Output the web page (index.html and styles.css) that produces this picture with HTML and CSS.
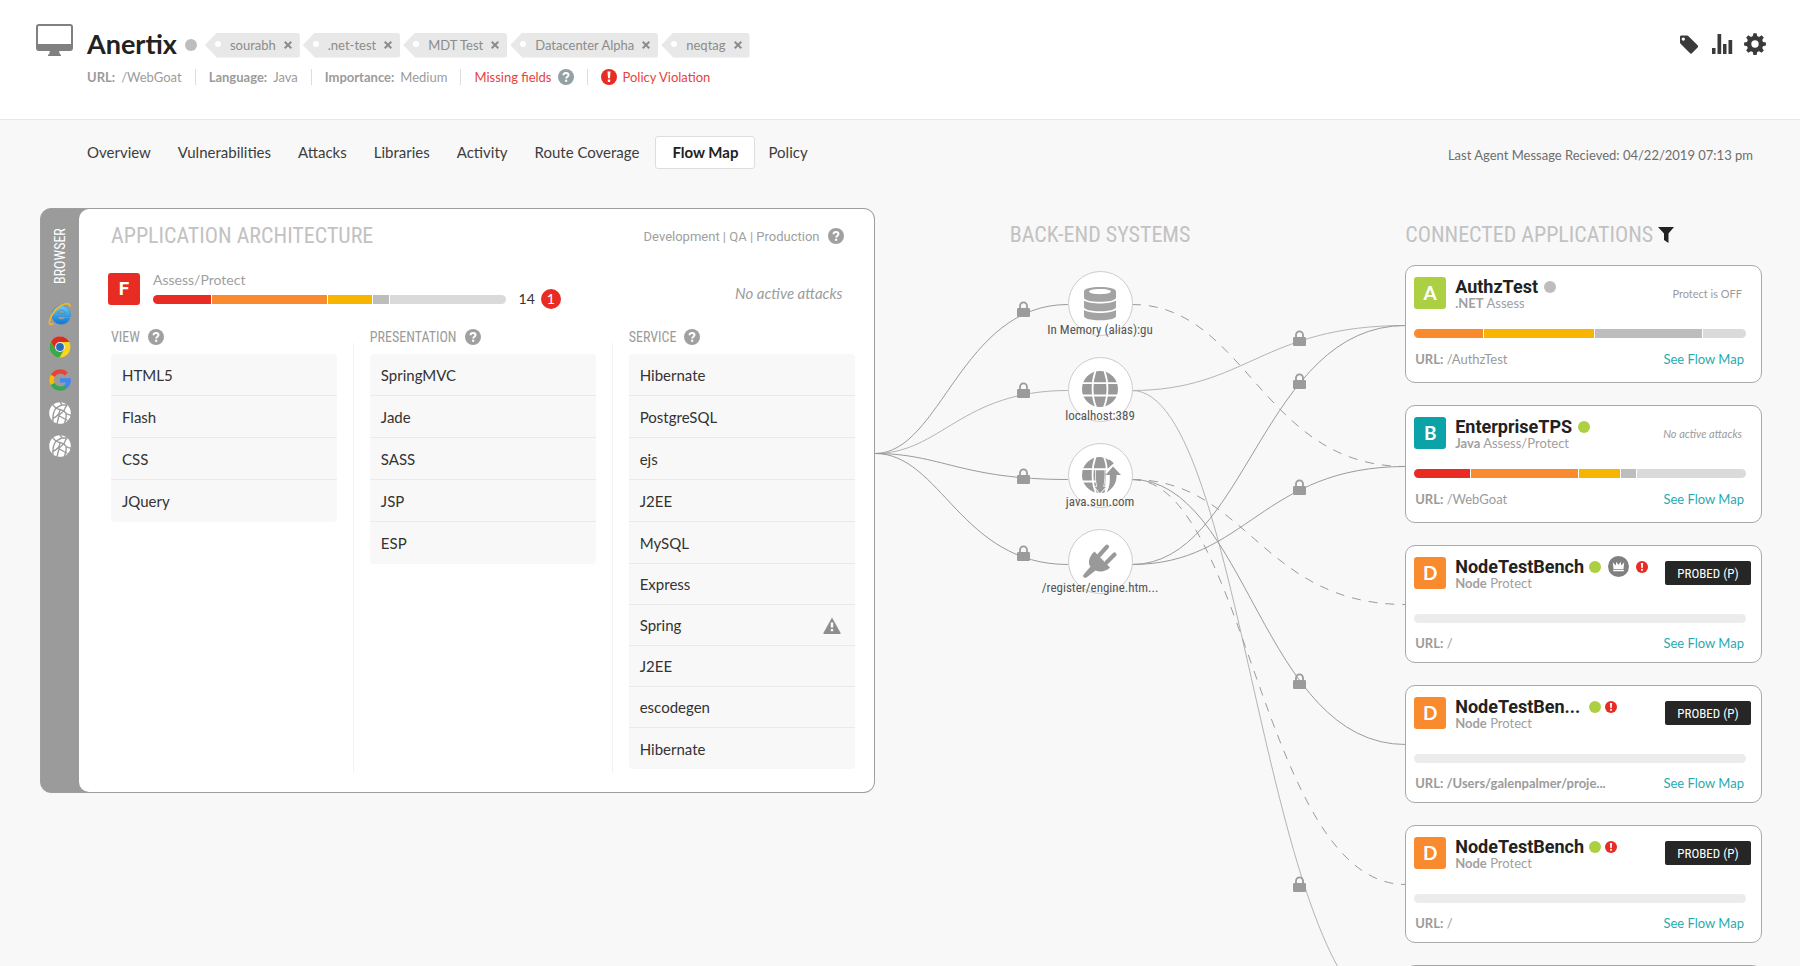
FILE: index.html
```html
<!DOCTYPE html>
<html lang="en">
<head>
<meta charset="utf-8">
<title>Anertix - Flow Map</title>
<link rel="stylesheet" href="styles.css">
</head>
<body>
<svg class="sprite" aria-hidden="true">
  <symbol id="i-help" viewBox="0 0 16 16"><circle cx="8" cy="8" r="8" fill="currentColor"/><path d="M5.500 6.200C5.600 4.700 6.600 3.900 8 3.900c1.500 0 2.500.9 2.500 2.100 0 1.700-2.300 1.900-2.300 3.500" fill="none" stroke="#fff" stroke-width="2"/><rect x="7.100" y="10.700" width="2.100" height="2.100" fill="#fff"/></symbol>
  <symbol id="i-alert" viewBox="0 0 16 16"><circle cx="8" cy="8" r="8" fill="#e82c24"/><path d="M6.500 2.500h3l-.5 6.800H7z" fill="#fff"/><rect x="6.800" y="10.500" width="2.400" height="2.500" fill="#fff"/></symbol>
  <symbol id="i-lock" viewBox="0 0 13 16"><path d="M3 7.500V4.800a3.500 3.500 0 0 1 7 0v2.700" fill="none" stroke="#9b9b9b" stroke-width="1.800"/><rect y="7" width="13" height="9" rx="1.200" fill="#9b9b9b"/></symbol>
  <symbol id="i-web" viewBox="0 0 22 22"><circle cx="11" cy="11" r="10.800" fill="#fff"/><g fill="none" stroke="#9b9b9b" stroke-width="1.400"><path d="M3.500 2.500 7 6.200l6-3.400 5.500.2M13 2.800 11 0M7 6.200c-3 4-3.500 8-3 13.500M7 6.200c2 1 3 1.500 4 1.300l4 1.300M11 7.500c0 4-2 6.500-7 9M9.500 13.500l9 5M10 13.700 8 22M15 8.800l-5.500 4.700M15 8.800c.5-2 1.500-4 3-5.500M15 8.800c1.500 3 3 4 7 4.500M17 12c.5 3 0 5.500-1.500 9"/></g></symbol>
</svg>

<div class="page">
  <header class="header">
    <svg class="monitor" viewBox="0 0 37 33" aria-hidden="true"><rect x="1" y="1" width="35" height="25" rx="2" fill="#fff" stroke="#808080" stroke-width="2"/><path d="M1 20h35v4.500a2 2 0 0 1-2 2H3a2 2 0 0 1-2-2z" fill="#808080"/><path d="M14 26h9l.6 3.600 1.400 1.400v1H12v-1l1.400-1.400z" fill="#808080"/></svg>
    <div class="identity">
      <div class="identity__top">
        <h1 class="app-title">Anertix</h1>
        <span class="dot dot--off"></span>
        <ul class="tags">
          <li class="tag"><span>sourabh</span><button class="tag__x" aria-label="Remove sourabh"><svg viewBox="0 0 8 8"><path d="M.7.7l6.600 6.600M7.300.7L.7 7.300"/></svg></button></li>
          <li class="tag"><span>.net-test</span><button class="tag__x" aria-label="Remove .net-test"><svg viewBox="0 0 8 8"><path d="M.7.7l6.600 6.600M7.300.7L.7 7.300"/></svg></button></li>
          <li class="tag"><span>MDT Test</span><button class="tag__x" aria-label="Remove MDT Test"><svg viewBox="0 0 8 8"><path d="M.7.7l6.600 6.600M7.300.7L.7 7.300"/></svg></button></li>
          <li class="tag"><span>Datacenter Alpha</span><button class="tag__x" aria-label="Remove Datacenter Alpha"><svg viewBox="0 0 8 8"><path d="M.7.7l6.600 6.600M7.300.7L.7 7.300"/></svg></button></li>
          <li class="tag"><span>neqtag</span><button class="tag__x" aria-label="Remove neqtag"><svg viewBox="0 0 8 8"><path d="M.7.7l6.600 6.600M7.300.7L.7 7.300"/></svg></button></li>
        </ul>
      </div>
      <ul class="meta">
        <li class="meta__item"><b>URL:</b><span>/WebGoat</span></li>
        <li class="meta__item"><b>Language:</b><span>Java</span></li>
        <li class="meta__item"><b>Importance:</b><span>Medium</span></li>
        <li class="meta__item meta__item--red"><span>Missing fields</span><svg class="icon meta__help"><use href="#i-help"/></svg></li>
        <li class="meta__item meta__item--red"><svg class="icon"><use href="#i-alert"/></svg><span>Policy Violation</span></li>
      </ul>
    </div>
    <div class="tools">
      <button class="tool" aria-label="Tags"><svg viewBox="0 0 22 22"><path fill-rule="evenodd" d="M2 3.500v5.800c0 .6.200 1 .6 1.400l9.200 9.400c.7.700 1.600.7 2.300 0l5.500-5.600c.7-.7.7-1.500 0-2.200L10.500 3.200A2 2 0 0 0 9 2.500H3.500A1.500 1.500 0 0 0 2 3.500zm5 2.600a1.700 1.700 0 1 1-3.400 0 1.700 1.700 0 0 1 3.400 0z"/></svg></button>
      <button class="tool" aria-label="Statistics"><svg viewBox="0 0 22 22"><path d="M1 15h3.500v6H1zM6.500 1h3.700v20H6.500zM12 11h3.500v10H12zM17.500 7h3.700v14h-3.700z"/></svg></button>
      <button class="tool" aria-label="Settings"><svg viewBox="0 0 22 22"><path fill-rule="evenodd" d="M9.400.2h3.200l.6 2.900 1.900.8L17.600 2.300l2.200 2.200-1.600 2.500.8 1.900 2.900.6v3.100l-2.900.6-.8 1.900 1.600 2.500-2.200 2.200-2.500-1.600-1.900.8-.6 2.900H9.400L8.800 19l-1.900-.8-2.500 1.600-2.200-2.200 1.600-2.500L3 13.200l-2.900-.6V9.500L3 8.900 3.800 7 2.200 4.500l2.200-2.200 2.500 1.600 1.900-.8zM11 7.300a3.700 3.700 0 1 0 0 7.400 3.700 3.700 0 0 0 0-7.400z"/></svg></button>
    </div>
  </header>

  <div class="subbar">
    <nav class="tabs">
      <a class="tab" href="#">Overview</a>
      <a class="tab" href="#">Vulnerabilities</a>
      <a class="tab" href="#">Attacks</a>
      <a class="tab" href="#">Libraries</a>
      <a class="tab" href="#">Activity</a>
      <a class="tab" href="#">Route Coverage</a>
      <a class="tab tab--active" href="#" aria-current="page">Flow Map</a>
      <a class="tab" href="#">Policy</a>
    </nav>
    <p class="agent">Last Agent Message Recieved: 04/22/2019 07:13 pm</p>
  </div>

  <main class="board">
    <section class="panel">
      <aside class="browsers">
        <h2 class="browsers__title">BROWSER</h2>
        <div class="browsers__list">
          <svg class="browser" viewBox="0 0 22 22"><defs><linearGradient id="ie" x1="0" y1="0" x2="0" y2="1"><stop offset="0" stop-color="#5fd0fa"/><stop offset="1" stop-color="#1273d0"/></linearGradient></defs><path d="M21.500 13.500H8.700c.2 2 1.600 3.200 3.700 3.200 1.500 0 2.600-.6 3.200-1.700h5.300c-1.200 4-4.500 6.200-8.700 6.200-5.300 0-9.200-3.700-9.200-9.100S7 2.700 12.200 2.700c5.700 0 9.500 4.200 9.300 10.800zM8.800 10.300h7.300c-.2-1.900-1.500-3.100-3.600-3.100s-3.400 1.200-3.700 3.100z" fill="url(#ie)" stroke="#1b86d8" stroke-width=".5"/><path d="M4.500 20.500C1 22.600-.2 21 .5 18 2 11 9 3 15 1.200c3.500-1.100 6-.6 6 2.600" fill="none" stroke="#f5b529" stroke-width="1.700"/></svg>
          <svg class="browser" viewBox="0 0 22 22"><circle cx="11" cy="11" r="10.500" fill="#fdd51e"/><path d="M1.900 5.750A10.500 10.500 0 0 0 10.500 21.500L15.500 13 11 11 6.500 13z" fill="#3ba94a"/><path d="M11 6h9.200A10.500 10.500 0 0 0 1.900 5.750L6.500 13z" fill="#db2b22"/><circle cx="11" cy="11" r="5" fill="#e8eef0"/><circle cx="11" cy="11" r="3.900" fill="#2b6db5"/></svg>
          <svg class="browser" viewBox="0 0 22 22"><g fill="none" stroke-width="4.300"><path d="M3.700 6.900A8.600 8.600 0 0 1 17.300 5" stroke="#ea4335"/><path d="M3.700 6.800a8.600 8.600 0 0 0 0 8.400" stroke="#fbbc05"/><path d="M3.600 15A8.600 8.600 0 0 0 16.700 17.600" stroke="#34a853"/><path d="M11 11.300h8.700a8.600 8.600 0 0 1-3.200 6.500" stroke="#4285f4"/></g></svg>
          <svg class="browser"><use href="#i-web"/></svg>
          <svg class="browser"><use href="#i-web"/></svg>
        </div>
      </aside>
      <div class="arch">
        <div class="arch__head">
          <h2 class="title">APPLICATION ARCHITECTURE</h2>
          <p class="envs">Development | QA | Production <svg class="icon icon--gray"><use href="#i-help"/></svg></p>
        </div>
        <div class="score">
          <span class="grade grade--f">F</span>
          <div class="score__main">
            <p class="score__label">Assess/Protect</p>
            <div class="bar"><i class="seg red" style="width:16.500%"></i><i class="seg orange" style="width:32.500%"></i><i class="seg yellow" style="width:12.500%"></i><i class="seg gray" style="width:4.600%"></i><i class="seg light"></i></div>
          </div>
          <div class="score__count"><span>14</span><span class="count-badge">1</span></div>
          <p class="score__status">No active attacks</p>
        </div>
        <div class="columns">
          <section class="column">
            <h3 class="column__title">VIEW <svg class="icon icon--gray"><use href="#i-help"/></svg></h3>
            <ul class="stack"><li>HTML5</li><li>Flash</li><li>CSS</li><li>JQuery</li></ul>
          </section>
          <div class="divider"></div>
          <section class="column">
            <h3 class="column__title">PRESENTATION <svg class="icon icon--gray"><use href="#i-help"/></svg></h3>
            <ul class="stack"><li>SpringMVC</li><li>Jade</li><li>SASS</li><li>JSP</li><li>ESP</li></ul>
          </section>
          <div class="divider"></div>
          <section class="column">
            <h3 class="column__title">SERVICE <svg class="icon icon--gray"><use href="#i-help"/></svg></h3>
            <ul class="stack stack--long"><li>Hibernate</li><li>PostgreSQL</li><li>ejs</li><li>J2EE</li><li>MySQL</li><li>Express</li><li>Spring <svg class="warn" viewBox="0 0 18 17" role="img" aria-label="Warning"><path d="M9 .5 17.600 16a.8.8 0 0 1-.7 1H1.100a.8.8 0 0 1-.7-1z" fill="#8e8e8e"/><path d="M7.800 5.500h2.400v5H7.800zM7.800 12h2.400v2.200H7.800z" fill="#fff"/></svg></li><li>J2EE</li><li>escodegen</li><li>Hibernate</li></ul>
          </section>
        </div>
      </div>
    </section>

    <section class="flow">
      <svg class="links" viewBox="0 0 531 820" preserveAspectRatio="none" aria-hidden="true">
        <path d="M0 245.500C66 245.500 86 96.500 193 96.500"/>
        <path class="thin" d="M0 245.500C66 245.500 86 182.500 193 182.500"/>
        <path d="M0 245.500C66 245.500 86 271.500 193 271.500"/>
        <path d="M0 245.500C66 245.500 86 356.500 193 356.500"/>
        <path class="dash" d="M257 96.500C372 96.500 387 258.500 531 258.500"/>
        <path class="thin" d="M257 182.500C372 182.500 387 117.500 531 117.500"/>
        <path class="thin" d="M257 182.500C372 182.500 387 815.500 531 815.500"/>
        <path d="M257 271.500C372 271.500 387 536.500 531 536.500"/>
        <path class="dash" d="M257 271.500C372 271.500 387 396.500 531 396.500"/>
        <path class="dash" d="M257 271.500C372 271.500 387 676.500 531 676.500"/>
        <path d="M257 356.500C372 356.500 387 117.500 531 117.500"/>
        <path d="M257 356.500C372 356.500 387 258.500 531 258.500"/>
      </svg>
      <svg class="lock lock--in" style="top:93px"><use href="#i-lock"/></svg>
      <svg class="lock lock--in" style="top:174px"><use href="#i-lock"/></svg>
      <svg class="lock lock--in" style="top:260px"><use href="#i-lock"/></svg>
      <svg class="lock lock--in" style="top:337px"><use href="#i-lock"/></svg>
      <svg class="lock lock--out" style="top:122px"><use href="#i-lock"/></svg>
      <svg class="lock lock--out" style="top:165px"><use href="#i-lock"/></svg>
      <svg class="lock lock--out" style="top:271px"><use href="#i-lock"/></svg>
      <svg class="lock lock--out" style="top:465px"><use href="#i-lock"/></svg>
      <svg class="lock lock--out" style="top:668px"><use href="#i-lock"/></svg>
      <div class="backend">
        <h2 class="title">BACK-END SYSTEMS</h2>
        <ul class="nodes">
          <li class="node"><span class="node__circle"><svg viewBox="0 0 36 36" fill="#a3a3a3"><path fill-rule="evenodd" d="M2 6.500C2 3.500 9 2 18 2s16 1.500 16 4.500v6c0 2.800-7 4.300-16 4.300S2 15.300 2 12.500zM7 6.600c0 1.700 5 2.600 11 2.600s11-.9 11-2.600S24 4 18 4 7 4.900 7 6.600z"/><path d="M2 15.500c3 2 9 3 16 3s13-1 16-3v6.500c0 2.800-7 4.200-16 4.200S2 24.800 2 22zM2 25c3 2 9 3 16 3s13-1 16-3v6c0 2.800-7 4.200-16 4.200S2 33.800 2 31z"/></svg></span><span class="node__label">In Memory (alias):gu</span></li>
          <li class="node"><span class="node__circle"><svg viewBox="0 0 36 36"><circle cx="18" cy="18" r="18" fill="#999"/><g fill="none" stroke="#fff" stroke-width="1.800"><path d="M0 12.200h36M0 24.500h36M13.500 0C9.500 11 9.500 25 14 36M22.500 0c4 11 4 25-.5 36"/></g></svg></span><span class="node__label">localhost:389</span></li>
          <li class="node"><span class="node__circle"><svg viewBox="0 0 36 36"><path d="M18 0a18 18 0 0 0 0 36c5 0 9-2 12-5V6A18 18 0 0 0 18 0z" fill="#999"/><path d="M24 13.500 29 8l1-3 9 4v30H22.500z" fill="#fff"/><g fill="none" stroke="#fff" stroke-width="1.800"><path d="M0 12.200h26M0 24.500h14M13.500 0C9.500 11 9.500 25 14 36M22 0c2.500 6 3 11 2.600 16"/></g><path d="M14 13.200h8.600c.3 6-.2 11-1.300 16.500H24L18 36.300l-5.500-6.600H15c-1-5.500-1.300-10.500-1-16.500z" fill="#999" stroke="#fff" stroke-width="1.600" paint-order="stroke"/><path d="M31 9.500 39 18h-4.500c.2 8-3 13-10 17.500 3-5 3.500-9.500 3.300-17.500H23.500z" fill="#999"/><path d="M27 2.500C29 3.500 30.500 4.800 31.800 6.300L26 11.300V8z" fill="#999"/></svg></span><span class="node__label">java.sun.com</span></li>
          <li class="node"><span class="node__circle"><svg viewBox="0 0 36 36"><path d="M12.500 8.500 28 24.500c-2.500 3-9.500 5.500-14.500 3l-9 7c-2 1.500-4.500-1-2.800-3l6.800-8C4.500 19 9 11 12.500 8.500z" fill="#999"/><path d="M17.500 12 25 3.700M24.500 19.500l8-8" stroke="#999" stroke-width="4.200" stroke-linecap="round"/></svg></span><span class="node__label">/register/engine.htm...</span></li>
        </ul>
      </div>
    </section>

    <section class="connected">
      <h2 class="title">CONNECTED APPLICATIONS <button class="filter" aria-label="Filter"><svg viewBox="0 0 16 16"><path d="M0 0h16L10.500 6.500V16L6 13V6.500z"/></svg></button></h2>
      <div class="cards">
        <article class="card">
          <div class="card__head"><span class="grade grade--a">A</span><div class="card__info"><div class="card__title"><h3>AuthzTest</h3><span class="dot dot--off"></span></div><p class="card__sub"><b>.NET</b> Assess</p></div><span class="card__note">Protect is OFF</span></div>
          <div class="bar"><i class="seg orange" style="width:20.800%"></i><i class="seg yellow" style="width:33.200%"></i><i class="seg gray" style="width:32%"></i><i class="seg light"></i></div>
          <div class="card__foot"><span><b>URL:</b> /AuthzTest</span><a href="#">See Flow Map</a></div>
        </article>
        <article class="card">
          <div class="card__head"><span class="grade grade--b">B</span><div class="card__info"><div class="card__title"><h3>EnterpriseTPS</h3><span class="dot dot--on"></span></div><p class="card__sub"><b>Java</b> Assess/Protect</p></div><span class="card__note"><em>No active attacks</em></span></div>
          <div class="bar"><i class="seg red" style="width:16.800%"></i><i class="seg orange" style="width:32.200%"></i><i class="seg yellow" style="width:12.400%"></i><i class="seg gray" style="width:4.600%"></i><i class="seg light"></i></div>
          <div class="card__foot"><span><b>URL:</b> /WebGoat</span><a href="#">See Flow Map</a></div>
        </article>
        <article class="card card--probed">
          <div class="card__head"><span class="grade grade--d">D</span><div class="card__info"><div class="card__title"><h3>NodeTestBench</h3><span class="dot dot--on"></span><svg class="crown" viewBox="0 0 22 22"><circle cx="11" cy="11" r="11" fill="#808080"/><path d="M5 6.500 8 10l.8-4L11 9.500 13.200 6l.8 4 3-3.500-.8 7H5.800zM5.500 14.500h11v1.500h-11z" fill="#fff"/></svg><svg class="alert"><use href="#i-alert"/></svg></div><p class="card__sub"><b>Node</b> Protect</p></div><button class="probed">PROBED (P)</button></div>
          <div class="bar bar--empty"></div>
          <div class="card__foot"><span><b>URL:</b> /</span><a href="#">See Flow Map</a></div>
        </article>
        <article class="card card--probed">
          <div class="card__head"><span class="grade grade--d">D</span><div class="card__info"><div class="card__title"><h3>NodeTestBen...</h3><span class="dot dot--on"></span><svg class="alert"><use href="#i-alert"/></svg></div><p class="card__sub"><b>Node</b> Protect</p></div><button class="probed">PROBED (P)</button></div>
          <div class="bar bar--empty"></div>
          <div class="card__foot"><b>URL: /Users/galenpalmer/proje...</b><a href="#">See Flow Map</a></div>
        </article>
        <article class="card card--probed">
          <div class="card__head"><span class="grade grade--d">D</span><div class="card__info"><div class="card__title"><h3>NodeTestBench</h3><span class="dot dot--on"></span><svg class="alert"><use href="#i-alert"/></svg></div><p class="card__sub"><b>Node</b> Protect</p></div><button class="probed">PROBED (P)</button></div>
          <div class="bar bar--empty"></div>
          <div class="card__foot"><span><b>URL:</b> /</span><a href="#">See Flow Map</a></div>
        </article>
        <article class="card"></article>
      </div>
    </section>
  </main>
</div>
</body>
</html>
```
FILE: styles.css
```css
* { box-sizing: border-box; }
body { margin: 0; font-family: Lato, "Open Sans", sans-serif; color: #333; background: #f8f8f8; }
h1, h2, h3, p, ul { margin: 0; padding: 0; font-weight: 400; }
ul { list-style: none; }
button { font: inherit; border: 0; padding: 0; background: none; cursor: pointer; }
a { text-decoration: none; color: inherit; }
svg { display: block; flex: none; }
.sprite { position: absolute; width: 0; height: 0; }
.page { height: 100vh; display: flex; flex-direction: column; overflow: hidden; }

.header { flex: none; display: flex; align-items: flex-start; gap: 14px; height: 120px; padding: 24px 34px 0 36px; background: #fff; border-bottom: 1px solid #e8e8e8; }
.monitor { width: 37px; height: 33px; }
.identity__top { display: flex; align-items: center; height: 42px; }
.app-title { padding-bottom: 2px; font-size: 27px; line-height: 36px; font-weight: 700; color: #222; }
.dot { flex: none; width: 12px; height: 12px; border-radius: 50%; }
.dot--off { background: #bdbdbd; }
.dot--on { background: #add042; }
.identity__top .dot { margin: 0 8px; }
.tags { display: flex; gap: 3px; }
.tag { position: relative; display: flex; align-items: center; gap: 8px; height: 25px; padding: 0 8px 0 25px; font-size: 13px; color: #8c8c8c; background: #e8e8e8; border-radius: 3px; clip-path: polygon(0 50%, 12px 0, 100% 0, 100% 100%, 12px 100%); }
.tag::before { content: ""; position: absolute; left: 10px; top: 8px; width: 6px; height: 6px; border-radius: 50%; background: #fff; }
.tag__x svg { width: 8px; height: 8px; stroke: #8c8c8c; stroke-width: 2; fill: none; }
.meta { display: flex; font-size: 13px; line-height: 16px; color: #9b9b9b; padding-top: 3px; }
.meta__item { display: flex; gap: 6px; align-items: center; padding: 0 13px; border-left: 1px solid #ddd; }
.meta__item:first-child { padding-left: 0; border-left: 0; }
.meta__item--red { color: #e8423b; }
.icon { width: 16px; height: 16px; }
.icon--gray { color: #a0a0a0; }
.meta__help { color: #95a0a5; }
.tools { display: flex; gap: 11px; margin: 9px 0 0 auto; }
.tool svg { width: 22px; height: 22px; fill: #3a3a3a; }

.subbar { flex: none; display: flex; justify-content: space-between; align-items: center; padding: 16px 47px 39px 74px; }
.tabs { display: flex; align-items: center; }
.tab { padding: 0 14px 0 13px; font-size: 15px; line-height: 31px; color: #3d3d3d; }
.tab--active { margin-left: 2px; padding: 0 16px; font-weight: 700; color: #222; background: #fff; border: 1px solid #dedede; border-radius: 3px; }
.agent { padding-top: 4px; font-size: 13px; color: #6e6e6e; }

.board { flex: 1; min-height: 0; display: flex; align-items: flex-start; padding: 0 38px 0 40px; }
.title { font-family: "Roboto Condensed", "Liberation Sans Narrow", Roboto, sans-serif; font-size: 22px; line-height: 28px; color: #c2c2c2; white-space: nowrap; }
.panel { flex: 833 1 0; min-width: 0; display: flex; background: #9b9b9b; border: 1px solid #9e9e9e; border-radius: 11px; }
.browsers { flex: none; width: 38px; display: flex; flex-direction: column; align-items: center; padding-top: 17px; }
.browsers__title { writing-mode: vertical-rl; transform: rotate(180deg); height: 60px; text-align: center; font-family: "Roboto Condensed", "Liberation Sans Narrow", Roboto, sans-serif; font-size: 14px; line-height: 20px; color: #fff; }
.browsers__list { display: flex; flex-direction: column; gap: 11px; padding-top: 17px; }
.browser { width: 22px; height: 22px; overflow: visible; }
.arch { flex: 1; min-width: 0; padding: 13px 19px 19px 29px; background: #fff; border-radius: 10px; }
.arch__head { display: flex; justify-content: space-between; align-items: center; padding: 0 11px 0 3px; }
.envs { display: flex; align-items: center; gap: 8px; font-family: Roboto, sans-serif; font-size: 13px; color: #a0a0a0; }
.score { display: flex; align-items: flex-start; margin-top: 23px; padding-right: 12px; }
.grade { flex: none; width: 32px; height: 32px; border-radius: 3px; font-size: 19px; line-height: 32px; font-weight: 700; text-align: center; color: #fff; }
.grade--f { background: #e82c24; font-family: Roboto, sans-serif; }
.grade--a { background: #add042; }
.grade--b { background: #0ba2a8; }
.grade--d { background: #f98a2e; }
.score__main { flex: none; width: 48%; margin-left: 13px; }
.score__label { font-size: 14px; line-height: 14px; color: #a0a0a0; }
.score__main .bar { margin-top: 8px; }
.score__count { display: flex; align-items: center; gap: 6px; margin: 16px 0 0 13px; font-size: 14px; line-height: 20px; }
.count-badge { width: 20px; border-radius: 50%; text-align: center; color: #fff; background: #e82c24; }
.score__status { margin-left: auto; font-size: 15px; line-height: 40px; font-style: italic; color: #9b9b9b; }
.bar { display: flex; gap: 1px; height: 9px; border-radius: 5px; overflow: hidden; }
.bar--empty { background: #ececec; }
.seg { flex: none; }
.red { background: #e82c24; }
.orange { background: #f98a2e; }
.yellow { background: #f7b500; }
.gray { background: #bdbdbd; }
.light { flex: 1; background: #dadada; }
.columns { display: flex; gap: 16px; margin-top: 14px; padding-left: 3px; }
.column { flex: 1; min-width: 0; padding-bottom: 4px; }
.divider { flex: none; width: 1px; margin-top: 16px; background: #f2f2f2; }
.column__title { display: flex; align-items: center; gap: 8px; font-family: "Roboto Condensed", "Liberation Sans Narrow", Roboto, sans-serif; font-size: 14px; line-height: 20px; color: #9b9b9b; }
.stack { margin-top: 7px; background: #f8f8f8; border-radius: 4px; font-size: 15px; }
.stack li { display: flex; justify-content: space-between; align-items: center; height: 42px; padding: 0 14px 0 11px; border-bottom: 1px solid #eaeaea; }
.stack li:last-child { border-bottom: 0; }
.stack--long li:nth-child(n + 6) { height: 41px; }
.warn { width: 18px; height: 17px; }

.flow { position: relative; flex: 531 1 0; min-width: 0; padding-top: 13px; }
.links { position: absolute; inset: 0 0 auto 0; width: 100%; height: 820px; }
.links path { fill: none; stroke: #9b9b9b; stroke-width: 1; vector-effect: non-scaling-stroke; }
.links .thin { stroke: #b4b4b4; }
.links .dash { stroke-dasharray: 9 8; }
.lock { position: absolute; width: 13px; height: 16px; margin-left: -6px; }
.lock--in { left: 28%; }
.lock--out { left: 80%; }
.backend { position: relative; display: flex; flex-direction: column; align-items: center; width: 85%; }
.nodes { display: flex; flex-direction: column; gap: 19px; padding-top: 22px; }
.node { display: flex; flex-direction: column; align-items: center; }
.node__circle { display: flex; align-items: center; justify-content: center; width: 65px; height: 65px; background: #fff; border: 1px solid #ccc; border-radius: 50%; }
.node__circle svg { width: 36px; height: 36px; margin-bottom: 2px; overflow: visible; }
.node__label { margin-top: -14px; font-family: "Roboto Condensed", "Liberation Sans Narrow", Roboto, sans-serif; font-size: 13px; line-height: 16px; color: #555; }

.connected { flex: 357 1 0; min-width: 0; padding-top: 13px; }
.connected .title { display: flex; align-items: center; gap: 5px; }
.filter svg { width: 16px; height: 16px; fill: #222; }
.cards { display: flex; flex-direction: column; gap: 22px; padding-top: 16px; }
.card { min-height: 118px; padding: 11px 15px 0 8px; background: #fff; border: 1px solid #a8a8a8; border-radius: 10px; }
.card__head { display: flex; align-items: flex-start; gap: 9px; margin-bottom: 20px; height: 32px; }
.card__title { display: flex; align-items: center; gap: 6px; height: 19px; }
.card__title h3 { font-family: Roboto, sans-serif; font-size: 18px; font-weight: 700; color: #222; }
.card__sub { font-size: 13px; line-height: 15px; color: #a0a0a0; }
.card__note { margin-left: auto; padding-right: 4px; font-size: 11px; line-height: 34px; color: #9b9b9b; }
.card__foot { display: flex; justify-content: space-between; margin-top: 11px; padding: 0 2px 0 1px; font-size: 13px; line-height: 20px; color: #9b9b9b; }
.card__foot a { color: #1fabb1; }
.card--probed { padding-right: 10px; }
.card--probed .card__head { margin-bottom: 25px; }
.card--probed .card__title { gap: 4px; }
.card--probed h3 { min-width: 130px; }
.card--probed .bar { margin-right: 5px; }
.card--probed .card__foot { margin-top: 10px; padding: 0 7px 0 1px; }
.crown { width: 21px; height: 21px; margin: 0 3px; }
.alert { width: 12px; height: 12px; }
.probed { margin: 4px 0 0 auto; width: 86px; height: 24px; border-radius: 2px; font-family: "Roboto Condensed", "Liberation Sans Narrow", Roboto, sans-serif; font-size: 13px; color: #fff; background: #262626; }
```
